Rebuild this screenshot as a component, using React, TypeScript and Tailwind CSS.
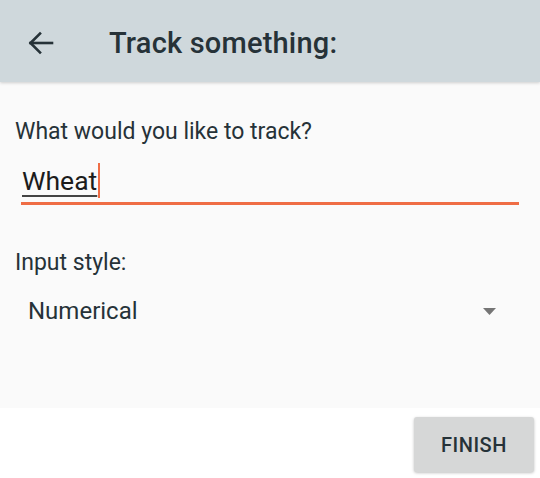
import React from "react";

export default function App() {
  return (
    <div
      className="w-[540px] h-[478px] flex flex-col bg-white overflow-hidden text-[#263238]"
      style={{ fontFamily: "Roboto, 'Noto Sans', sans-serif" }}
    >
      <header className="h-[82px] shrink-0 bg-[#cfd8dc] flex items-center shadow-[0_1px_3px_rgba(0,0,0,0.18)] relative z-10">
        <svg
          className="ml-[28px] mt-[4px]"
          width="26"
          height="24"
          viewBox="0 0 26 24"
          fill="none"
          stroke="#263238"
          strokeWidth="2.6"
          strokeLinecap="square"
        >
          <path d="M2.5 12H24" />
          <path d="M12 2.5L2.5 12L12 21.5" />
        </svg>
        <div className="ml-[55px] mt-[3px] text-[29px] leading-[34px] font-medium tracking-[0.2px]">
          Track something:
        </div>
      </header>
      <main className="h-[326px] shrink-0 bg-[#fafafa] flex flex-col pl-[15px]">
        <div className="mt-[36px] text-[23px] leading-[27px]">What would you like to track?</div>
        <div className="mt-[16px] ml-[6px] mr-[21px] h-[44px] border-b-[3px] border-[#ef6d45] flex items-start pt-[4px]">
          <span className="text-[26.5px] leading-[32px] text-[#1c1c1c] underline decoration-[#444] decoration-2 underline-offset-[5px] pl-[1px]">
            Wheat
          </span>
          <span className="w-[2px] h-[35px] bg-[#ef6d45] ml-[1px] -mt-[2px]" />
        </div>
        <div className="mt-[44px] text-[23px] leading-[27px]">Input style:</div>
        <div className="mt-[21px] flex items-center pr-[44px]">
          <span className="ml-[13px] text-[24px] leading-[28px] flex-1">Numerical</span>
          <svg width="13" height="7" viewBox="0 0 13 7" className="mt-[1px]">
            <path d="M0 0H13L6.5 7Z" fill="#757575" />
          </svg>
        </div>
      </main>
      <footer className="flex-1 bg-white flex justify-end items-start pr-[6px] pt-[9px]">
        <button className="w-[120px] h-[55px] rounded-[3px] bg-[#d6d7d7] shadow-[0_1px_3px_rgba(0,0,0,0.25)] text-[20px] font-medium tracking-[0.5px] text-[#263238]">
          FINISH
        </button>
      </footer>
    </div>
  );
}
